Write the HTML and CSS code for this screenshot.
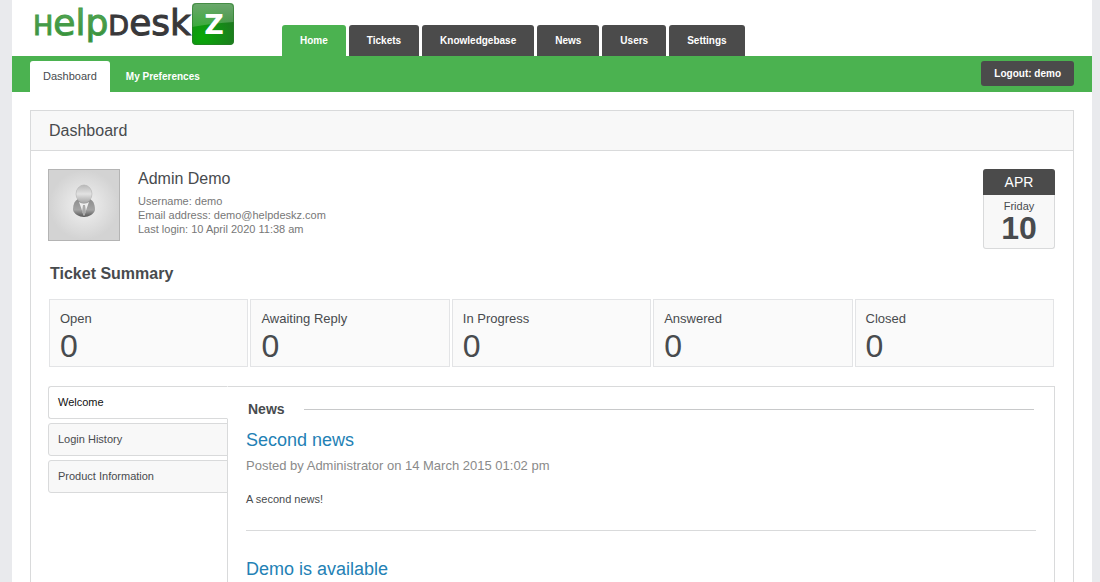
FILE: index.html
```html
<!DOCTYPE html>
<html lang="en">
<head>
    <meta charset="UTF-8">
    <meta name="viewport" content="width=device-width, initial-scale=1.0">
    <title>HelpDeskZ - Dashboard</title>
    <link rel="stylesheet" href="styles.css">
</head>
<body>
    <div class="wrapper">
        <!-- Header -->
        <header class="header">
            <a href="#" class="logo">
                <svg width="204" height="52" viewBox="0 0 204 52">
                    <defs>
                        <linearGradient id="logoGreen" x1="0" y1="0" x2="0" y2="1">
                            <stop offset="0" stop-color="#5fae5c"/>
                            <stop offset="1" stop-color="#2f8a35"/>
                        </linearGradient>
                        <radialGradient id="boxGreen" cx="0.25" cy="0.8" r="0.8">
                            <stop offset="0" stop-color="#08a808"/>
                            <stop offset="1" stop-color="#1d7a1f"/>
                        </radialGradient>
                        <linearGradient id="boxShine" x1="0" y1="0" x2="0" y2="1">
                            <stop offset="0" stop-color="#fff" stop-opacity="0.35"/>
                            <stop offset="1" stop-color="#fff" stop-opacity="0.18"/>
                        </linearGradient>
                    </defs>
                    <text class="logo-text" x="-1" y="35"><tspan class="logo-small logo-green">H</tspan><tspan class="logo-green">elp</tspan><tspan class="logo-small">D</tspan>esk</text>
                    <rect x="158" y="3" width="42" height="42" rx="4" fill="url(#boxGreen)"/>
                    <path d="M158 27V7a4 4 0 0 1 4-4h34a4 4 0 0 1 4 4v15q-20 1-42 5z" fill="url(#boxShine)"/>
                    <rect x="158.500" y="3.500" width="41" height="41" rx="4" fill="none" stroke="#2c7c2c" stroke-opacity="0.6"/>
                    <text class="logo-z" x="180" y="34" text-anchor="middle">Z</text>
                </svg>
            </a>
            <nav class="main-nav">
                <a href="#" class="active">Home</a>
                <a href="#">Tickets</a>
                <a href="#">Knowledgebase</a>
                <a href="#">News</a>
                <a href="#">Users</a>
                <a href="#">Settings</a>
            </nav>
        </header>

        <!-- Sub navigation -->
        <div class="sub-bar">
            <nav class="sub-nav">
                <a href="#" class="active">Dashboard</a>
                <a href="#">My Preferences</a>
            </nav>
            <button type="button" class="logout">Logout: demo</button>
        </div>

        <main class="panel">
            <h1 class="panel-title">Dashboard</h1>
            <div class="panel-body">
                <!-- Profile -->
                <section class="profile">
                    <div class="avatar">
                        <svg width="24" height="34" viewBox="0 0 24 34">
                            <defs>
                                <linearGradient id="headFill" x1="0" y1="0" x2="0" y2="1">
                                    <stop offset="0" stop-color="#b8b8b8"/>
                                    <stop offset="0.5" stop-color="#e2e2e2"/>
                                    <stop offset="1" stop-color="#a5a5a5"/>
                                </linearGradient>
                                <linearGradient id="bodyFill" x1="0" y1="0" x2="0" y2="1">
                                    <stop offset="0" stop-color="#8c8c8c"/>
                                    <stop offset="0.6" stop-color="#a5a5a5"/>
                                    <stop offset="1" stop-color="#555"/>
                                </linearGradient>
                            </defs>
                            <path d="M6 15C2 17 1 22 1 26c1 4 6 7 11 7s10-3 11-7c0-4-1-9-5-11z" fill="url(#bodyFill)"/>
                            <path d="M7 18l5 14 5-14q-5 3-10 0z" fill="#eee"/>
                            <path d="M11 21h2l1 7-2 4-2-4z" fill="#aaa"/>
                            <ellipse cx="12" cy="10" rx="8" ry="9" fill="url(#headFill)" stroke="#aaa" stroke-width="0.5"/>
                        </svg>
                    </div>
                    <div class="profile-info">
                        <h2>Admin Demo</h2>
                        <p>Username: demo</p>
                        <p>Email address: demo@helpdeskz.com</p>
                        <p>Last login: 10 April 2020 11:38 am</p>
                    </div>
                    <div class="date-box">
                        <div class="month">APR</div>
                        <div class="weekday">Friday</div>
                        <div class="day">10</div>
                    </div>
                </section>

                <!-- Ticket Summary -->
                <h3 class="summary-title">Ticket Summary</h3>
                <div class="summary">
                    <div class="stat"><span>Open</span><strong>0</strong></div>
                    <div class="stat"><span>Awaiting Reply</span><strong>0</strong></div>
                    <div class="stat"><span>In Progress</span><strong>0</strong></div>
                    <div class="stat"><span>Answered</span><strong>0</strong></div>
                    <div class="stat"><span>Closed</span><strong>0</strong></div>
                </div>

                <!-- Tabs -->
                <div class="tabs">
                    <nav class="tab-list">
                        <a href="#" class="active">Welcome</a>
                        <a href="#">Login History</a>
                        <a href="#">Product Information</a>
                    </nav>
                    <section class="tab-content">
                        <h4 class="section-title">News</h4>
                        <article class="news">
                            <a href="#">Second news</a>
                            <p class="posted">Posted by Administrator on 14 March 2015 01:02 pm</p>
                            <p class="text">A second news!</p>
                        </article>
                        <article class="news">
                            <a href="#">Demo is available</a>
                        </article>
                    </section>
                </div>
            </div>
        </main>
    </div>
</body>
</html>
```
FILE: styles.css
```css
* {
    box-sizing: border-box;
}
body {
    margin: 0;
    background-color: #e9eaed;
    color: #484b4e;
    font-family: Arial, "Liberation Sans", sans-serif;
    font-size: 11px;
}
h1, h2, h3, h4, p {
    margin: 0;
}
a {
    text-decoration: none;
}
.wrapper {
    display: flex;
    flex-direction: column;
    min-height: 100vh;
    margin: 0 8px 0 12px;
    background: #fff;
}

/* Header */
.header {
    display: flex;
    align-items: flex-end;
    height: 56px;
    padding-left: 22px;
}
.logo {
    align-self: flex-start;
    width: 248px;
}
.logo svg {
    display: block;
}
.logo-text {
    font-family: "DejaVu Sans", sans-serif;
    font-size: 36px;
    fill: #38383a;
    stroke: #38383a;
    stroke-width: 1px;
}
.logo-small {
    font-size: 27px;
}
.logo-green {
    fill: url(#logoGreen);
    stroke: #459c48;
}
.logo-z {
    font-family: "DejaVu Sans", sans-serif;
    font-size: 27px;
    font-weight: bold;
    fill: #fff;
}
.main-nav {
    display: flex;
    gap: 3px;
}
.main-nav a {
    height: 31px;
    padding: 0 18px;
    border-radius: 3px 3px 0 0;
    background: #4b4b4b;
    color: #fff;
    font-size: 10px;
    font-weight: bold;
    line-height: 32px;
}
.main-nav a.active {
    background: #4bb250;
}

/* Sub navigation */
.sub-bar {
    display: flex;
    justify-content: space-between;
    height: 36px;
    padding: 5px 18px 0;
    background: #4bb250;
}
.sub-nav {
    display: flex;
    gap: 3px;
}
.sub-nav a {
    padding: 0 13px;
    border-radius: 3px 3px 0 0;
    color: #fff;
    font-size: 10px;
    font-weight: bold;
    line-height: 31px;
}
.sub-nav a.active {
    background: #fff;
    color: #484b4e;
    font-size: 11px;
    font-weight: normal;
}
.logout {
    height: 25px;
    padding: 0 13px;
    border: none;
    border-radius: 3px;
    background: #4b4b4b;
    color: #fff;
    font: bold 10px Arial, "Liberation Sans", sans-serif;
    cursor: pointer;
}

/* Panel */
.panel {
    display: flex;
    flex: 1;
    flex-direction: column;
    margin: 18px 18px 0;
    border: 1px solid #d9dadb;
    border-bottom: none;
}
.panel-title {
    padding: 0 18px;
    border-bottom: 1px solid #d9dadb;
    background: #f8f8f8;
    font-size: 16px;
    font-weight: normal;
    line-height: 39px;
}
.panel-body {
    display: flex;
    flex: 1;
    flex-direction: column;
    padding: 18px 18px 0 17px;
}

/* Profile */
.profile {
    display: flex;
    gap: 18px;
}
.avatar {
    display: flex;
    align-items: center;
    justify-content: center;
    width: 72px;
    height: 72px;
    padding-bottom: 8px;
    border: 1px solid #b4b4b4;
    background: radial-gradient(#f2f2f2, #d3d3d3 70%);
}
.profile-info {
    flex: 1;
    color: #777;
    line-height: 14px;
}
.profile-info h2 {
    margin-bottom: 5px;
    color: #484b4e;
    font-size: 16px;
    font-weight: normal;
    line-height: 20px;
}
.date-box {
    width: 72px;
    height: 80px;
    border: 1px solid #d9dadb;
    border-top: none;
    border-radius: 3px;
    background: #f8f8f8;
    text-align: center;
}
.date-box .month {
    margin: 0 -1px;
    border-radius: 3px 3px 0 0;
    background: #4b4b4b;
    color: #fff;
    font-size: 14px;
    line-height: 26px;
}
.date-box .weekday {
    padding-top: 4px;
    line-height: 15px;
}
.date-box .day {
    font-size: 32px;
    font-weight: bold;
    line-height: 28px;
}

/* Ticket Summary */
.summary-title {
    margin: 15px 0 15px 2px;
    font-size: 16px;
    line-height: 20px;
}
.summary {
    display: grid;
    grid-template-columns: repeat(5, 1fr);
    gap: 2px;
    margin: 0 1px 19px;
}
.stat {
    height: 68px;
    padding: 11px 10px 0;
    border: 1px solid #e3e4e6;
    background: #fafafa;
}
.stat span,
.stat strong {
    display: block;
}
.stat span {
    font-size: 13px;
    line-height: 16px;
}
.stat strong {
    font-size: 32px;
    font-weight: normal;
    line-height: 38px;
}

/* Tabs */
.tabs {
    display: flex;
    flex: 1;
}
.tab-list {
    z-index: 1;
    display: flex;
    flex-direction: column;
    gap: 4px;
    width: 180px;
    margin-right: -1px;
}
.tab-list a {
    padding: 0 9px;
    border: 1px solid #d9dadb;
    border-radius: 3px 0 0 3px;
    background: #f8f8f8;
    color: #484b4e;
    line-height: 31px;
}
.tab-list a.active {
    border-right-color: #fff;
    background: #fff;
    color: #111;
}
.tab-content {
    flex: 1;
    padding: 12px 18px 0;
    border: 1px solid #d9dadb;
    border-bottom: none;
}
.section-title {
    display: flex;
    align-items: center;
    gap: 19px;
    margin: 0 2px 10px;
    font-size: 14px;
    line-height: 20px;
}
.section-title::after {
    content: "";
    flex: 1;
    border-top: 1px solid #c8c9ca;
}
.news {
    padding-bottom: 24px;
    border-bottom: 1px solid #d9dadb;
}
.news:last-child {
    border-bottom: none;
    padding-bottom: 0;
}
.news + .news {
    margin-top: 27px;
}
.news a {
    display: block;
    color: #2381b5;
    font-size: 18px;
    line-height: 22px;
}
.news .posted {
    margin-top: 6px;
    color: #8a8a8a;
    font-size: 13px;
    line-height: 18px;
}
.news .text {
    margin-top: 17px;
    line-height: 14px;
}
```
